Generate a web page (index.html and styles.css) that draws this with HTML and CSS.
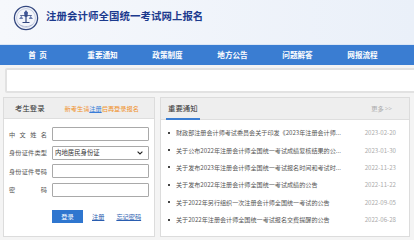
FILE: index.html
```html
<!DOCTYPE html>
<html lang="zh-CN">
<head>
    <meta charset="UTF-8">
    <meta name="viewport" content="width=device-width, initial-scale=1.0">
    <title>注册会计师全国统一考试网上报名</title>
    <link rel="stylesheet" href="styles.css">
</head>
<body>

    <!-- Header -->
    <div class="header">
        <svg class="logo" width="26" height="26" viewBox="0 0 26 26">
            <circle cx="13" cy="13" r="11.6" fill="#f3f5fb" stroke="#33477f" stroke-width="1.3"/>
            <circle cx="13" cy="13" r="9.4" fill="none" stroke="#9aa6c6" stroke-width="0.5"/>
            <path d="M13 5.5 L13 17.5" stroke="#33477f" stroke-width="1.2"/>
            <path d="M11 7.5 Q13 4.5 15 7.5 L14.3 12 L11.7 12 Z" fill="#3f5596"/>
            <path d="M7.2 10.5 L18.8 10.5" stroke="#33477f" stroke-width="0.8"/>
            <path d="M6 14 L8.4 10.8 L10.2 14 Z" fill="#6b7db0"/>
            <path d="M15.8 14 L17.6 10.8 L20 14 Z" fill="#6b7db0"/>
            <path d="M9.5 17.5 L16.5 17.5" stroke="#33477f" stroke-width="1"/>
            <path d="M6.5 19.5 Q13 23.5 19.5 19.5" fill="none" stroke="#7383b0" stroke-width="0.7" stroke-dasharray="0.8 0.6"/>
        </svg>
        <span class="site-title">注册会计师全国统一考试网上报名</span>
    </div>

    <!-- Navigation -->
    <div class="nav">
        <a href="#" class="nav-item">首&nbsp;&nbsp;页</a>
        <a href="#" class="nav-item">重要通知</a>
        <a href="#" class="nav-item">政策制度</a>
        <a href="#" class="nav-item">地方公告</a>
        <a href="#" class="nav-item">问题解答</a>
        <a href="#" class="nav-item">网报流程</a>
    </div>

    <!-- Notice box -->
    <div class="notice-box"></div>

    <div class="main">
        <!-- Login -->
        <div class="panel login-panel">
            <div class="panel-head login-head">
                <span class="panel-title">考生登录</span>
                <span class="login-tip">新考生请<a href="#">注册</a>后再登录报名</span>
            </div>
            <form class="login-form">
                <div class="form-row">
                    <label>中 文 姓 名</label>
                    <input type="text">
                </div>
                <div class="form-row">
                    <label>身份证件类型</label>
                    <div class="select-wrap">
                        <select>
                            <option>内地居民身份证</option>
                        </select>
                        <svg class="chevron" width="6" height="4" viewBox="0 0 6 4">
                            <path d="M0.6 0.6 L3 3 L5.4 0.6" fill="none" stroke="#222" stroke-width="1.1"/>
                        </svg>
                    </div>
                </div>
                <div class="form-row">
                    <label>身份证件号码</label>
                    <input type="text">
                </div>
                <div class="form-row">
                    <label>密 码</label>
                    <input type="password">
                </div>
                <div class="form-actions">
                    <button type="button">登录</button>
                    <a href="#">注册</a>
                    <a href="#">忘记密码</a>
                </div>
            </form>
        </div>

        <!-- Notices -->
        <div class="panel news-panel">
            <div class="panel-head news-head">
                <span class="panel-title news-title">重要通知</span>
                <a href="#" class="more">更多 &gt;&gt;</a>
            </div>
            <ul class="news-list">
                <li><span class="news-text">财政部注册会计师考试委员会关于印发《2023年注册会计师...</span><span class="news-date">2023-02-20</span></li>
                <li><span class="news-text">关于公布2022年注册会计师全国统一考试成绩复核结果的公...</span><span class="news-date">2023-01-30</span></li>
                <li><span class="news-text">关于发布2023年注册会计师全国统一考试报名时间和考试时...</span><span class="news-date">2022-11-23</span></li>
                <li><span class="news-text">关于发布2022年注册会计师全国统一考试成绩的公告</span><span class="news-date">2022-11-22</span></li>
                <li><span class="news-text">关于2022年另行组织一次注册会计师全国统一考试的公告</span><span class="news-date">2022-09-05</span></li>
                <li><span class="news-text">关于2022年注册会计师全国统一考试报名交费提醒的公告</span><span class="news-date">2022-06-28</span></li>
            </ul>
        </div>
    </div>

</body>
</html>
```

FILE: styles.css
```css
/* General Styles */
body {
    margin: 0;
    padding: 0;
    width: 414px;
    overflow: hidden;
    background-color: #f4f4f4;
    font-family: "Noto Sans CJK SC", "Noto Sans", sans-serif;
    color: #333;
}

a {
    text-decoration: none;
}

/* Header */
.header {
    height: 45px;
    box-sizing: border-box;
    padding: 5px 0 0 13px;
    display: flex;
    align-items: flex-start;
    background: linear-gradient(to right, #f6f8fc, #eaf0f9);
    border-bottom: 1px solid #dbe6f5;
}

.logo {
    display: block;
}

.site-title {
    margin: 2px 0 0 7px;
    font-size: 10.4px;
    font-weight: bold;
    line-height: 18px;
    color: #1b3a8e;
    letter-spacing: 0.1px;
}

/* Navigation */
.nav {
    height: 20px;
    display: flex;
    padding-left: 5px;
    background-color: #3a7dd2;
}

.nav-item {
    width: 65px;
    text-align: center;
    font-size: 7.6px;
    font-weight: bold;
    line-height: 20px;
    color: #fff;
}

/* Notice box */
.notice-box {
    height: 21px;
    margin: 3px -10px 0 5px;
    background-color: #fff;
    border: 2px solid #e2e2e2;
    border-radius: 2px;
}

/* Panels */
.main {
    display: flex;
    gap: 5px;
    padding: 4px 0 0 3px;
}

.panel {
    height: 140px;
    box-sizing: border-box;
    background-color: #fff;
    border: 1px solid #dcdcdc;
}

.login-panel {
    width: 152px;
}

.news-panel {
    width: 250px;
}

.panel-head {
    display: flex;
    align-items: center;
    background-color: #eeeeee;
    border-bottom: 1px solid #dedede;
}

.login-head {
    height: 20px;
    padding-left: 11px;
}

.panel-title {
    font-size: 7.4px;
    line-height: 12px;
    color: #333;
}

.login-tip {
    margin-left: 20px;
    font-size: 6.2px;
    color: #f0902a;
}

.login-tip a {
    color: #3b7dd8;
    text-decoration: underline;
}

/* Login form */
.login-form {
    padding: 8px 0 0 5px;
}

.form-row {
    display: flex;
    align-items: center;
    height: 14px;
    margin-bottom: 4.5px;
}

.form-row label {
    width: 38px;
    margin-right: 5px;
    font-size: 6.2px;
    color: #555;
    text-align: justify;
    text-align-last: justify;
    white-space: nowrap;
}

.form-row input,
.form-row select {
    width: 97px;
    height: 14px;
    box-sizing: border-box;
    margin: 0;
    padding: 0 2px;
    border: 1px solid #a9a9a9;
    border-radius: 1px;
    background-color: #fff;
    font-family: inherit;
    font-size: 6.4px;
    color: #333;
    outline: none;
}

.select-wrap {
    position: relative;
    height: 14px;
}

.select-wrap select {
    appearance: none;
    -webkit-appearance: none;
    display: block;
}

.chevron {
    position: absolute;
    right: 6px;
    top: 5px;
}

.form-actions {
    display: flex;
    align-items: center;
    padding: 9px 0 0 43px;
}

.form-actions button {
    width: 31px;
    height: 13px;
    padding: 0;
    margin-right: 9px;
    border: none;
    background-color: #2f76cf;
    color: #fff;
    font-family: inherit;
    font-size: 6.2px;
    cursor: pointer;
}

.form-actions a {
    margin-right: 12px;
    font-size: 6.2px;
    color: #2a5db0;
    text-decoration: underline;
}

/* News */
.news-head {
    height: 22px;
    box-sizing: border-box;
    padding: 0 17px 0 5px;
    justify-content: space-between;
    align-items: stretch;
}

.news-title {
    display: flex;
    align-items: center;
    padding: 0 2px;
    border-bottom: 2px solid #3a7dd2;
    margin-bottom: -1px;
}

.more {
    align-self: center;
    font-size: 6.2px;
    color: #aaa;
}

.news-list {
    list-style: none;
    margin: 0;
    padding: 4px 13px 0 7px;
}

.news-list li {
    display: flex;
    align-items: center;
    height: 17.4px;
    font-size: 6.1px;
}

.news-list li::before {
    content: "";
    width: 2px;
    height: 2px;
    margin-right: 6px;
    background-color: #444;
}

.news-text {
    flex: 1;
    color: #555;
    white-space: nowrap;
}

.news-date {
    color: #aaa;
}
```
